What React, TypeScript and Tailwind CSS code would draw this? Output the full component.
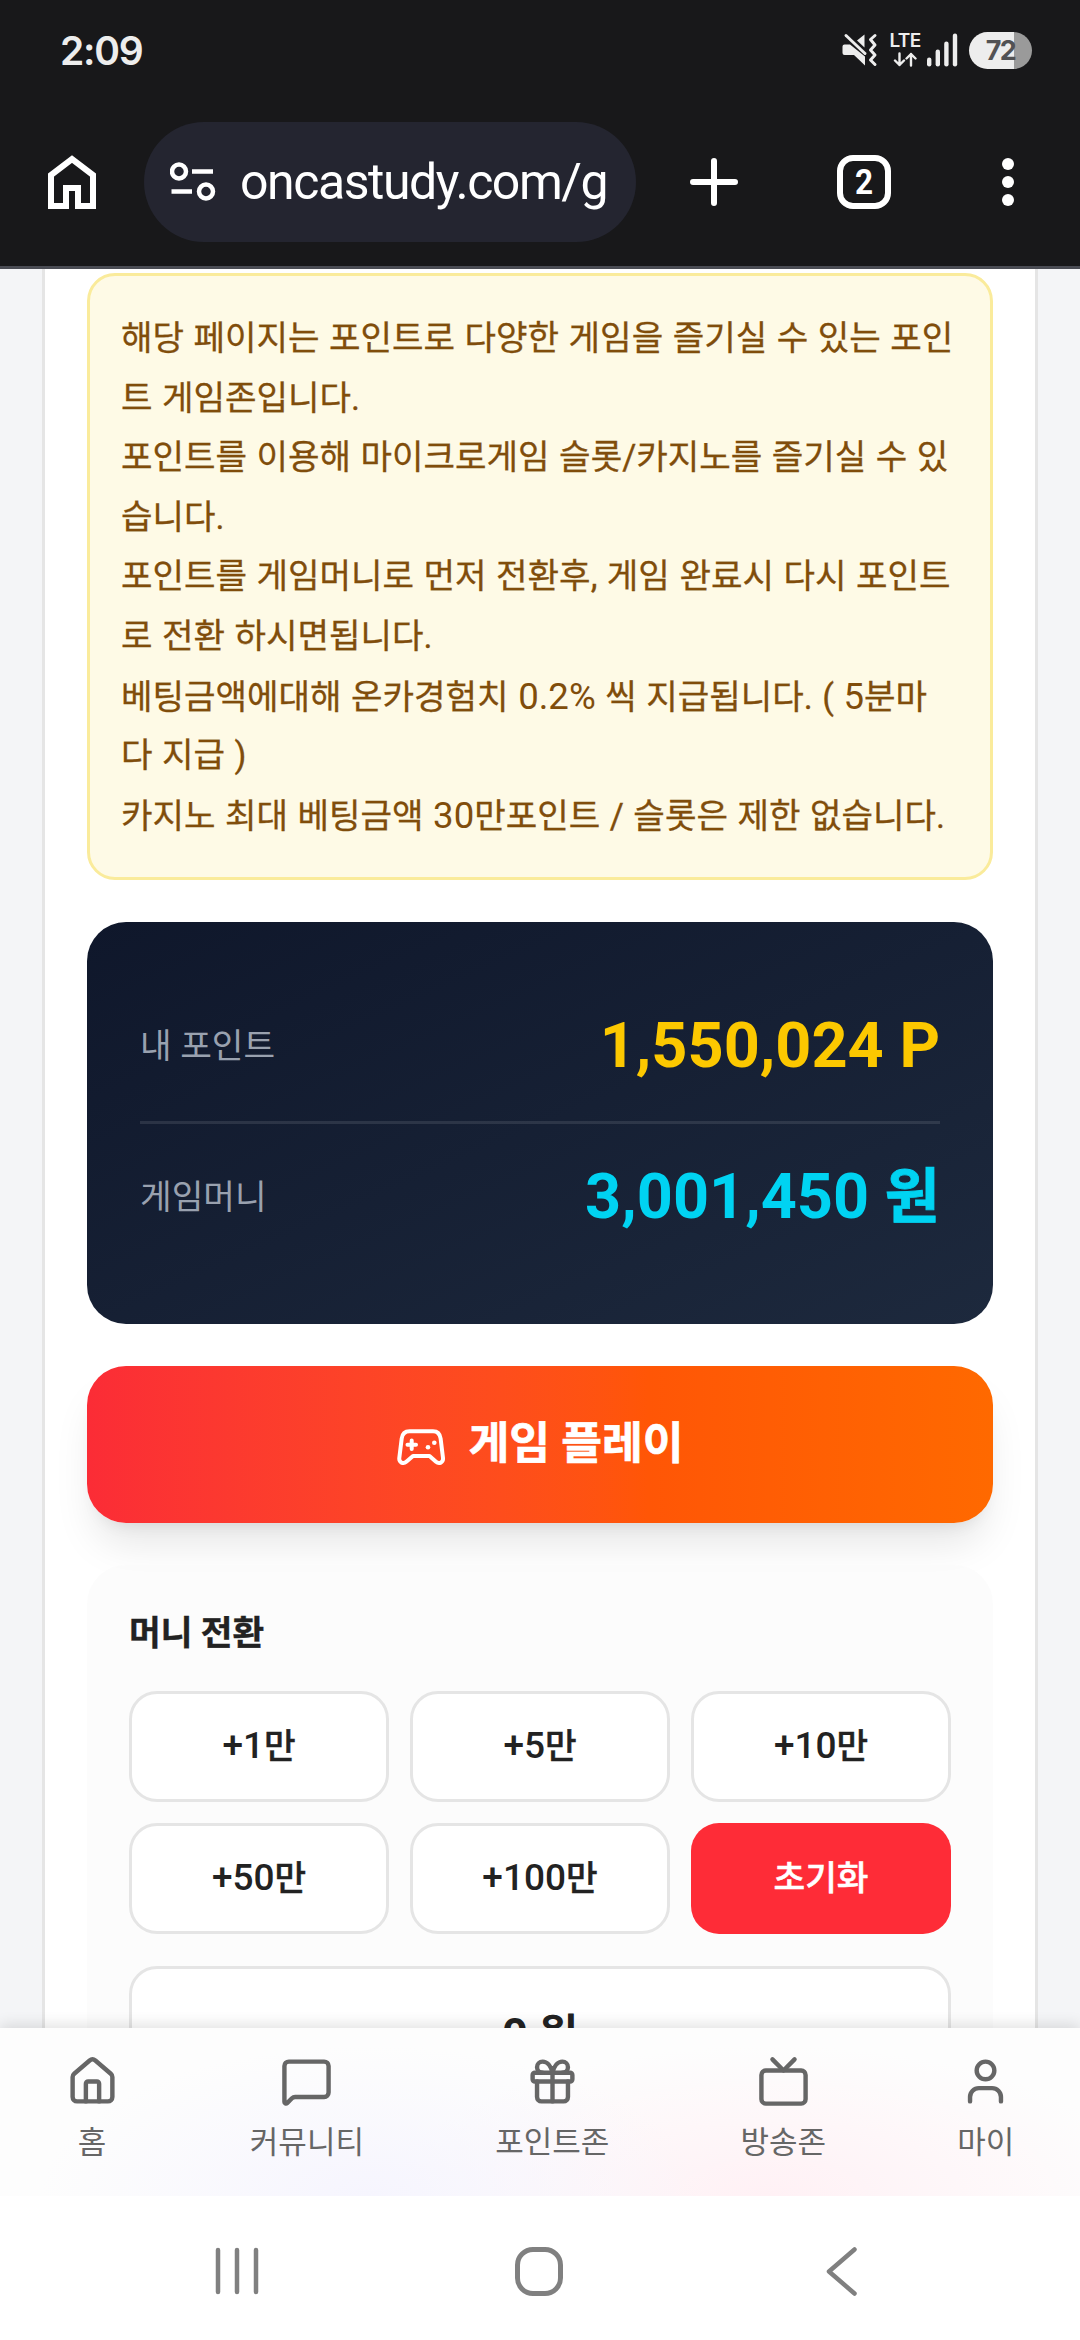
import { House, MessageSquare, Gift, Tv, User } from 'lucide-react'
import clsx from 'clsx'

const notices = [
  ['해당 페이지는 포인트로 다양한 게임을 즐기실 수 있는 포인', '트 게임존입니다.'],
  ['포인트를 이용해 마이크로게임 슬롯/카지노를 즐기실 수 있', '습니다.'],
  ['포인트를 게임머니로 먼저 전환후, 게임 완료시 다시 포인트', '로 전환 하시면됩니다.'],
  ['베팅금액에대해 온카경험치 0.2% 씩 지급됩니다. ( 5분마', '다 지급 )'],
  ['카지노 최대 베팅금액 30만포인트 / 슬롯은 제한 없습니다.'],
]

const amounts = ['+1만', '+5만', '+10만', '+50만', '+100만']

const navItems = [
  { label: '홈', icon: House },
  { label: '커뮤니티', icon: MessageSquare },
  { label: '포인트존', icon: Gift },
  { label: '방송존', icon: Tv },
  { label: '마이', icon: User },
]

// Latin digits and signs are set a little larger than the Hangul around them
function Mixed({ text, latin }: { text: string; latin: string }) {
  return (
    <>
      {text.split(/([0-9+%.]*[0-9][0-9+%.,]*)/).map((part, i) =>
        i % 2 ? <span key={i} className={latin}>{part}</span> : part
      )}
    </>
  )
}

function StatusBar() {
  return (
    <div className="flex h-[100px] items-center justify-between pl-[60px] pr-12 text-[#ededed]">
      <span className="font-[Inter] text-[39px] font-semibold leading-none tracking-[-1.2px]">2:09</span>
      <div className="flex items-center">
        <svg width="36" height="34" viewBox="0 0 36 34" fill="none">
          <path d="M2.5 11.5H8L23 23.5V32.5L12 22H2.5Q0.5 22 0.5 20V13.5Q0.5 11.5 2.5 11.5Z" fill="currentColor" />
          <path d="M15 7.5L22.5 1.5V14.5Z" fill="currentColor" />
          <path d="M4 2.5L23 20.5" stroke="currentColor" strokeWidth="3" strokeLinecap="round" />
          <path d="M33 2.5L28.5 6.5L33 12L28.5 17L33 22L28.5 27L33 31.5" stroke="currentColor" strokeWidth="3" strokeLinecap="round" strokeLinejoin="round" />
        </svg>
        <div className="ml-[11px] flex w-8 flex-col items-center">
          <span className="font-[Inter] text-[19px] font-semibold leading-[16px] tracking-[-0.6px]">LTE</span>
          <svg width="24" height="15" viewBox="0 0 24 15" fill="none" stroke="currentColor" strokeWidth="2.4" strokeLinecap="round" strokeLinejoin="round" className="mt-[3px]">
            <path d="M6.5 1.5V13M2 8.5L6.5 13L11 8.5M18 13.5V2M13.5 6.5L18 2L22.5 6.5" />
          </svg>
        </div>
        <svg width="32" height="34" viewBox="0 0 32 34" fill="currentColor" className="ml-[6px]">
          <rect x="0" y="24.5" width="4.4" height="9" rx="2.2" />
          <rect x="8.6" y="16.5" width="4.4" height="17" rx="2.2" />
          <rect x="17.2" y="8.5" width="4.4" height="25" rx="2.2" />
          <rect x="25.8" y="0.5" width="4.4" height="33" rx="2.2" />
        </svg>
        <div className="ml-[10px] flex h-[37px] w-[63px] items-center justify-center rounded-full bg-[linear-gradient(90deg,#ededed_72%,#9a9a9a_72%)]">
          <span className="font-[Inter] text-[27px] font-bold leading-none tracking-[-1.5px] text-[#525254]">72</span>
        </div>
      </div>
    </div>
  )
}

function BrowserBar() {
  return (
    <div className="flex h-[166px] items-start pt-[22px] text-white">
      <svg width="48" height="54" viewBox="0 0 48 54" fill="none" stroke="currentColor" strokeWidth="6" className="ml-12 mt-[33px]">
        <path d="M3 51V20L24 4L45 20V51H30V33H18V51Z" />
      </svg>
      <div className="ml-12 flex h-[120px] w-[492px] items-center overflow-hidden rounded-full bg-[#242530] pl-[26px]">
        <svg width="46" height="40" viewBox="0 0 46 40" fill="none" stroke="currentColor" strokeWidth="4.5">
          <circle cx="9" cy="9.5" r="7" />
          <circle cx="36" cy="29.5" r="7" />
          <path d="M22 9.5H43M1.5 29.5H22" />
        </svg>
        <div className="ml-[24px] w-[374px] whitespace-nowrap font-[Roboto] text-[50px] leading-[70px] tracking-[-1.45px]">
          oncastudy.com/g
        </div>
      </div>
      <svg width="48" height="50" viewBox="0 0 48 50" fill="none" stroke="currentColor" strokeWidth="6" strokeLinecap="round" className="ml-[54px] mt-[35px]">
        <path d="M24 4V46M3 25H45" />
      </svg>
      <div className="ml-[99px] mt-[33px] flex h-[54px] w-[54px] items-center justify-center rounded-[16px] border-[6px] border-white font-[Roboto] text-[35px] font-bold leading-none">
        <span className="scale-x-90">2</span>
      </div>
      <svg width="12" height="48" viewBox="0 0 12 48" fill="currentColor" className="ml-[111px] mt-[36px]">
        <circle cx="6" cy="6" r="6" />
        <circle cx="6" cy="24" r="6" />
        <circle cx="6" cy="42" r="6" />
      </svg>
    </div>
  )
}

function GamepadIcon() {
  return (
    <svg width="49" height="37" viewBox="0 0 49 37" fill="none" stroke="currentColor" strokeWidth="4" strokeLinecap="round" strokeLinejoin="round" className="mt-[5px]">
      <path d="M12.5 2.2H36C40.5 2.2 43 5 43.6 9.5L46 29C46.5 33.5 42 35.5 39 32.8L32.5 27H16L9.3 32.8C6.3 35.5 1.8 33.5 2.3 29L4.7 9.5C5.3 5 8 2.2 12.5 2.2Z" />
      <path d="M14.7 11.5V20M10.5 15.7H19" />
      <circle cx="31" cy="18.3" r="2.3" fill="currentColor" stroke="none" />
      <circle cx="37.3" cy="13.7" r="2.3" fill="currentColor" stroke="none" />
    </svg>
  )
}

function BalanceRow({ label, value, unit, color }: { label: string; value: string; unit: string; color: string }) {
  return (
    <div className="flex h-[148px] items-center justify-between">
      <span className="text-[34.4px] text-[#99a1af]">{label}</span>
      <span className={clsx('pb-[3px] text-[63px] font-bold leading-none', color)}>
        {value} {unit === 'P' ? unit : <span className="text-[60px] leading-[0] [-webkit-text-stroke:0.8px]">{unit}</span>}
      </span>
    </div>
  )
}

export default function App() {
  return (
    <div className="flex h-[2340px] w-[1080px] flex-col overflow-hidden bg-white font-[Roboto,'Noto_Sans_CJK_KR',sans-serif]">
      <header className="h-[269px] shrink-0 border-b-[3px] border-[#4a4c54] bg-[#18181a]">
        <StatusBar />
        <BrowserBar />
      </header>

      <main className="h-[1759px] shrink-0 overflow-hidden bg-[#f4f5f7] px-[42px]">
        <div className="flex h-[1900px] flex-col gap-[42px] border-x-[3px] border-[#e5e5e5] bg-white px-[42px] pt-1">
          {/* Notice */}
          <div className="h-[607px] shrink-0 rounded-[28px] border-[3px] border-[#faeb9b] bg-[#fefae6] pl-[31px] pt-[33px] text-[34.25px] leading-[59.6px] text-[#804d0b] [-webkit-text-stroke:0.3px] [word-spacing:1px]">
            {notices.map((lines, i) => (
              <p key={i} className="whitespace-nowrap">
                {lines.map((line, j) => (
                  <span key={j} className="block h-[59.6px]">
                    <Mixed text={line} latin="text-[36.6px] [-webkit-text-stroke:0px]" />
                  </span>
                ))}
              </p>
            ))}
          </div>

          {/* Balance */}
          <div className="h-[402px] shrink-0 rounded-[39px] bg-linear-to-br from-[#0f172b] to-[#1d293d] px-[53px] pt-[51px]">
            <BalanceRow label="내 포인트" value="1,550,024" unit="P" color="text-[#fcc800]" />
            <div className="h-[3px] bg-white/10" />
            <BalanceRow label="게임머니" value="3,001,450" unit="원" color="text-[#00d3f2]" />
          </div>

          <button className="flex h-[157px] shrink-0 items-center justify-center gap-[23px] rounded-[39px] bg-linear-to-r from-[#fb2c36] via-[#ff5606] via-62% to-[#ff6900] text-[44.3px] font-bold text-white shadow-[0_28px_42px_-8px_rgba(0,0,0,0.1),0_11px_17px_-11px_rgba(0,0,0,0.1)]">
            <GamepadIcon />
            <span className="[-webkit-text-stroke:0.6px]">게임 플레이</span>
          </button>

          {/* Money transfer */}
          <div className="h-[640px] shrink-0 rounded-[39px] bg-[#fafafa]/60 px-[42px] pt-[42px] text-[#222]">
            <h2 className="h-[84px] text-[34.4px] font-bold leading-[52px] [-webkit-text-stroke:0.4px]">머니 전환</h2>
            <div className="grid grid-cols-3 gap-[21px]">
              {amounts.map((amount) => (
                <button key={amount} className="h-[111px] rounded-[28px] border-[3px] border-[#e5e5e5] bg-white pb-[2px] text-[34.4px] font-medium [-webkit-text-stroke:0.4px]">
                  <Mixed text={amount} latin="text-[37px] [-webkit-text-stroke:0px]" />
                </button>
              ))}
              <button className="h-[111px] rounded-[28px] bg-[#fe2c37] text-[34.4px] font-medium text-white [-webkit-text-stroke:0.5px]">초기화</button>
            </div>
            <div className="mt-8 flex h-[137px] items-center justify-center rounded-[28px] border-[3px] border-[#e5e5e5] bg-white text-[43px] font-bold">
              <span className="whitespace-pre">
                <Mixed text="0 원" latin="text-[45px]" />
              </span>
            </div>
          </div>
        </div>
      </main>

      <nav className="relative flex h-[168px] shrink-0 items-start justify-around bg-[#fdfdfd] bg-[radial-gradient(ellipse_330px_150px_at_370px_100%,#f6f5fe,transparent),radial-gradient(ellipse_380px_150px_at_770px_100%,#fff1f5,transparent)] pt-[27px] text-[#666] shadow-[0_-3px_14px_rgba(0,0,0,0.12)]">
        {navItems.map(({ label, icon: Icon }) => (
          <div key={label} className="flex flex-col items-center">
            <Icon size={53} strokeWidth={2} />
            <span className="mt-[10px] text-[31px] leading-[50px]">{label}</span>
          </div>
        ))}
      </nav>

      <footer className="relative flex h-[144px] shrink-0 items-start bg-white pt-[51px] text-[#808080]">
        <svg width="44" height="48" viewBox="0 0 44 48" stroke="currentColor" strokeWidth="4.5" strokeLinecap="round" className="ml-[215px]">
          <path d="M3 3V45M22 3V45M41 3V45" />
        </svg>
        <div className="ml-[256px] h-[49px] w-[48px] rounded-[18px] border-[5px] border-[#808080]" />
        <svg width="32" height="49" viewBox="0 0 32 49" fill="none" stroke="currentColor" strokeWidth="4.5" strokeLinecap="round" strokeLinejoin="round" className="ml-[263px]">
          <path d="M28.5 2.5L3 24.5L28.5 46.5" />
        </svg>
      </footer>
    </div>
  )
}
